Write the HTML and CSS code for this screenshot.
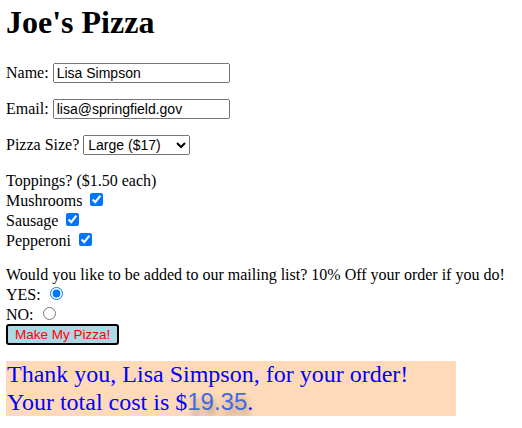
FILE: index.html
```html
<!DOCTYPE html>
<html>
  <head>
    <meta charset="UTF-8">
    <title>Joe's Pizza</title>
    <link rel="stylesheet" href="styles.css">
  </head>
  <body>
    <h1>Joe's Pizza</h1>
    <form>
      <p>Name: <input type="text" name="name" value="Lisa Simpson"></p>
      <p>Email: <input type="text" name="email" value="lisa@springfield.gov"></p>
      <p>Pizza Size?
        <select name="size">
          <option>Small ($10)</option>
          <option>Medium ($14)</option>
          <option selected>Large ($17)</option>
        </select>
      </p>
      <p class="toppings">
        Toppings? ($1.50 each)<br>
        Mushrooms <input type="checkbox" checked><br>
        Sausage <input type="checkbox" checked><br>
        Pepperoni <input type="checkbox" checked>
      </p>
      <p class="mailing">
        Would you like to be added to our mailing list? 10% Off your order if you do!<br>
        YES: <input type="radio" name="mail" checked><br>
        NO: <input type="radio" name="mail"><br>
        <button type="button" class="order-btn">Make My Pizza!</button>
      </p>
    </form>
    <div class="thanks">
      Thank you, Lisa Simpson, for your order!<br>
      Your total cost is $<span class="total">19.35</span>.
    </div>
  </body>
</html>
```

FILE: styles.css
```css
body {
  margin: 0 6px;
  font-family: "Liberation Serif", serif;
}

h1 {
  margin: 4px 0 22px;
}

input[type="text"],
select {
  font-family: "Liberation Sans", Arial, sans-serif;
  box-sizing: border-box;
}

input[type="text"] {
  width: 177px;
  height: 20px;
  font-size: 14px;
}

select {
  width: 107px;
  font-size: 14px;
}

.toppings {
  margin-top: 17px;
}

.order-btn {
  font-family: "Liberation Sans", Arial, sans-serif;
  font-size: 13.5px;
  padding: 1px 7px;
  background-color: lightblue;
  color: red;
  border: 2px solid black;
  border-radius: 3px;
}

.thanks {
  width: 449px;
  background-color: peachpuff;
  color: blue;
  font-size: 24px;
  line-height: 27px;
  padding: 0 0 0 1px;
}

.total {
  font-family: "Liberation Sans", Arial, sans-serif;
  color: royalblue;
  text-shadow: 2px 6px 6px rgba(0, 0, 0, .35);
}
```
